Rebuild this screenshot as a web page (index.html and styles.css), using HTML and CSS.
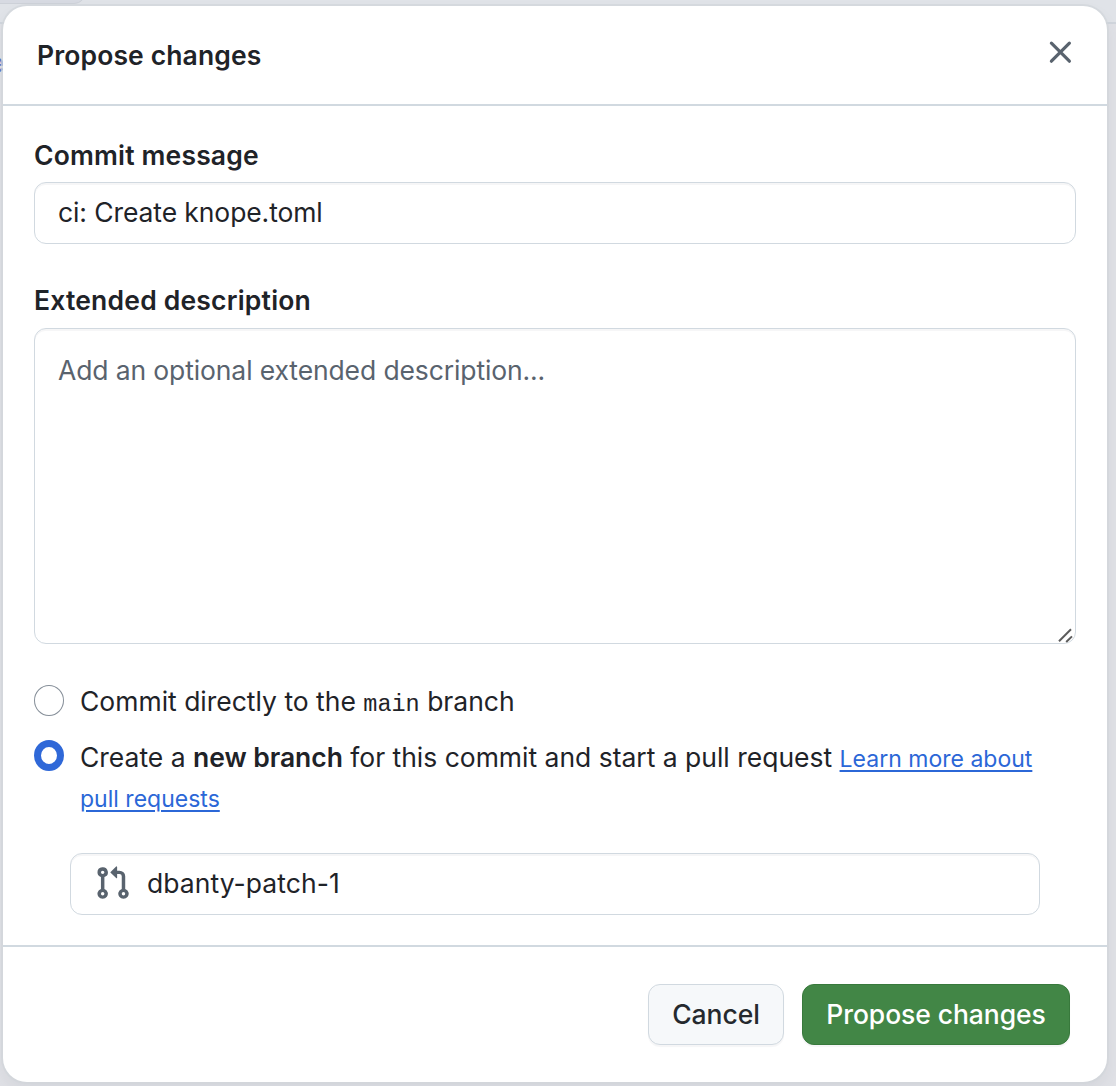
FILE: index.html
```html
<!DOCTYPE html>
<html lang="en">
<head>
<meta charset="utf-8">
<title>Propose changes</title>
<link rel="stylesheet" href="styles.css">
</head>
<body>
<div class="page-tab"></div>
<div class="page-panel"><a class="page-link">e</a></div>
<main class="dialog">
  <header class="dialog-header">
    <h1 class="title">Propose changes</h1>
    <button class="close" aria-label="Close">
      <svg width="24" height="24" viewBox="0 0 24 24"><path d="M3.4 3.2 21.4 21.2M21.4 3.2 3.4 21.2" fill="none" stroke="#59636e" stroke-width="3.2" stroke-linecap="round"/></svg>
    </button>
  </header>
  <form class="dialog-body">
    <label class="label" for="message">Commit message</label>
    <input class="field message" id="message" value="ci: Create knope.toml">
    <label class="label label-desc" for="description">Extended description</label>
    <div class="area-wrap">
      <textarea class="field area" id="description" placeholder="Add an optional extended description..."></textarea>
      <svg class="grip" width="16" height="16" viewBox="0 0 16 16"><path d="M1 13.3 13 1.3M8.2 14 14 8.4" fill="none" stroke="#5c5c5c" stroke-width="2"/></svg>
    </div>
    <div class="choice">
      <span class="radio"></span>
      <p class="choice-text choice-direct">Commit directly to the <code class="branch-name">main</code> branch</p>
    </div>
    <div class="choice choice-second">
      <span class="radio radio-on"></span>
      <p class="choice-text choice-create">Create a <b class="strong">new branch</b> for this commit and start a pull request <a class="link">Learn more about<br>pull requests</a></p>
    </div>
    <div class="field branch">
      <svg class="branch-icon" width="37" height="36" viewBox="0 0 16 16" preserveAspectRatio="none" fill="#59636e"><path d="M1.5 3.25a2.25 2.25 0 1 1 3 2.122v5.256a2.251 2.251 0 1 1-1.5 0V5.372A2.25 2.25 0 0 1 1.5 3.25Zm5.677-.177L9.573.677A.25.25 0 0 1 10 .854V2.5h1A2.5 2.5 0 0 1 13.5 5v5.628a2.251 2.251 0 1 1-1.5 0V5a1 1 0 0 0-1-1h-1v1.646a.25.25 0 0 1-.427.177L7.177 3.427a.25.25 0 0 1 0-.354ZM3.75 2.5a.75.75 0 1 0 0 1.5.75.75 0 0 0 0-1.5Zm0 9.5a.75.75 0 1 0 0 1.5.75.75 0 0 0 0-1.5Zm8.25.75a.75.75 0 1 0 1.5 0 .75.75 0 0 0-1.5 0Z"/></svg>
      <span class="branch-value">dbanty-patch-1</span>
    </div>
  </form>
  <footer class="dialog-footer">
    <button class="button cancel">Cancel</button>
    <button class="button primary">Propose changes</button>
  </footer>
</main>
</body>
</html>
```
FILE: styles.css
```css
* { box-sizing: border-box; }
body {
  margin: 0;
  height: 1086px;
  padding: 6px 9px 4px 3px;
  overflow: hidden;
  position: relative;
  background: #e0e3e8;
  color: #1f2328;
  font-family: Inter, "Liberation Sans", sans-serif;
  font-size: 26.5px;
}
.page-tab {
  position: absolute; left: -30px; top: -30px; width: 116px; height: 34px;
  border: 1px solid #cdd1d8; border-radius: 12px; background: #d7dae2;
}
.page-panel {
  position: absolute; left: 0; right: 0; top: 22px; bottom: 0;
  border-top: 2px solid #d0d5dc; background: #e0e1e6;
}
.page-link {
  position: absolute; left: -10px; top: 24px;
  font-size: 25px; line-height: 30px; color: #6080cb;
}
.dialog {
  position: relative;
  height: 1076px;
  display: flex; flex-direction: column;
  background: #fff;
  border-radius: 24px;
  box-shadow: 0 0 0 2px rgba(209, 213, 218, .7), 0 8px 16px rgba(66, 74, 83, .08);
}
.dialog-header {
  height: 100px; flex: none;
  display: flex; justify-content: space-between; align-items: flex-start;
  padding: 33px 35px 0 34px;
  border-bottom: 2px solid #d1d9e0;
}
.title { margin: 0; font-size: 26.5px; line-height: 32px; font-weight: 620; letter-spacing: .12px; }
.close { width: 24px; height: 24px; border: 0; padding: 0; margin-top: 1px; background: none; }
.close svg { display: block; }
.dialog-body { height: 839px; flex: none; padding: 33px 31px 0; display: flex; flex-direction: column; }
.label { height: 32px; margin-bottom: 11px; line-height: 32px; font-weight: 620; letter-spacing: .17px; }
.label-desc { margin-top: 40px; margin-bottom: 12px; letter-spacing: .2px; }
.field {
  width: 100%; height: 62px; padding: 0 23px;
  border: 1px solid #d1d9e0; border-radius: 12px;
  background: #fff; box-shadow: inset 0 2px 0 rgba(31, 35, 40, .04);
  color: inherit; font: inherit; outline: 0;
}
.message { padding-bottom: 2px; letter-spacing: -.1px; }
.area-wrap { position: relative; height: 316px; }
.area { display: block; height: 316px; padding: 25px 23px; line-height: 32px; letter-spacing: -.12px; resize: none; }
.area::placeholder { color: #59636e; opacity: 1; }
.grip { position: absolute; right: 2px; bottom: 0; }
.choice { display: flex; gap: 16px; align-items: flex-start; margin-top: 37px; }
.choice-second { margin-top: 16px; }
.radio { width: 30px; height: 31px; flex: none; margin-top: 4px; border: 1px solid #868f99; border-radius: 50%; }
.radio-on { border: 7px solid #2f68d8; margin-top: 3px; }
.choice-text { margin: 0; line-height: 40px; white-space: pre; }
.choice-direct { letter-spacing: -.01px; }
.choice-create { letter-spacing: -.015px; }
.strong { font-weight: 620; letter-spacing: -.05px; }
.branch-name { font: 23.5px/1 "Liberation Mono", monospace; }
.link { font-size: 23px; line-height: 1; letter-spacing: .01px; color: #2b67d7; text-decoration: underline; text-decoration-thickness: 2px; text-underline-offset: 3px; }
.branch { width: 970px; margin: 36px 0 0 36px; padding-bottom: 2px; display: flex; align-items: center; gap: 16px; }
.branch-icon { flex: none; }
.branch-value { letter-spacing: .05px; }
.dialog-footer {
  flex: 1; border-top: 2px solid #d1d9e0;
  padding: 37px 37px 0; display: flex; justify-content: flex-end; gap: 18px;
}
.button {
  height: 61px; padding: 0 0 2px; border: 1px solid #d1d9e0; border-radius: 12px;
  font: inherit; color: #25292e; font-weight: 550; letter-spacing: -.08px; background: #f6f8fa;
  box-shadow: 0 2px 1px rgba(31, 35, 40, .04);
}
.cancel { width: 136px; }
.primary { width: 268px; background: #428646; border-color: #38793c; color: #fff; }
```
